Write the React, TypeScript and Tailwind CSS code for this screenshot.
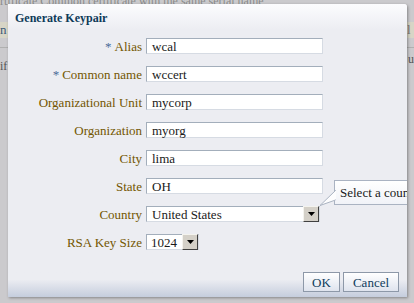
import React from "react";

function Arrow({ w }: { w: number }) {
  return (
    <div
      className="flex h-[16px] items-center justify-center border border-t-[#f4f3ee] border-l-[#f4f3ee] border-b-[#404040] border-r-[#404040] bg-[#d4d0c8]"
      style={{ width: w }}
    >
      <svg width="7" height="4" viewBox="0 0 7 4">
        <polygon points="0,0 7,0 3.5,4" fill="#000" />
      </svg>
    </div>
  );
}

function Row({ label, req, children }: { label: string; req?: boolean; children: React.ReactNode }) {
  return (
    <div className="flex h-[16px] items-center">
      <div className="w-[138px] whitespace-nowrap pr-[4px] text-right text-[13px] leading-none text-[#735600]">
        {req && <span className="mr-[3px] text-[#4a6a98]">*</span>}
        {label}
      </div>
      {children}
    </div>
  );
}

function Input({ value }: { value: string }) {
  return (
    <div className="flex h-[16px] w-[177px] items-center border border-[#d6dbe3] border-t-[#a3aebb] border-l-[#a3aebb] bg-white pl-[5px] text-[13px] leading-none text-[#1a1a1a]">
      {value}
    </div>
  );
}

export default function App() {
  return (
    <div className="relative h-[303px] w-[414px] overflow-hidden bg-[#cbcacd] font-['Liberation_Serif','Times_New_Roman',serif]">
      {/* background page */}
      <div className="absolute left-0 top-[-8px] w-[414px] overflow-hidden whitespace-nowrap text-[12px] text-[#8a8a8a]">
        rtificate Common certificate with the same serial name
      </div>
      <div className="absolute left-0 top-[22px] h-[16px] w-[414px] bg-[#d7d5c6]" />
      <div className="absolute left-0 top-[23px] text-[13px] leading-none text-[#3c5a78]">n</div>
      <div className="absolute left-[407px] top-[23px] text-[13px] leading-none text-[#777]">l</div>
      <div className="absolute left-0 top-[47px] h-px w-[414px] bg-[#b0b0b0]" />
      <div className="absolute left-0 top-[60px] text-[12px] leading-none text-[#555]">if:</div>
      <div className="absolute left-[408px] top-[53px] text-[12px] leading-none text-[#555]">u</div>

      {/* dialog */}
      <div className="absolute left-[8px] top-[4px] flex h-[293px] w-[399px] flex-col overflow-hidden rounded-tr-[3px] bg-[#ecedf2] shadow-[1px_1px_3px_rgba(0,0,0,0.35)]">
        <div className="flex h-[26px] items-center bg-linear-to-b from-[#fcfcfe] to-[#ecedf2] pl-[7px] pt-[1px] text-[12px] font-bold text-[#0d3a58]">
          Generate Keypair
        </div>
        <div className="flex flex-col gap-[12px] pt-[8px]">
          <Row label="Alias" req>
            <Input value="wcal" />
          </Row>
          <Row label="Common name" req>
            <Input value="wccert" />
          </Row>
          <Row label="Organizational Unit">
            <Input value="mycorp" />
          </Row>
          <Row label="Organization">
            <Input value="myorg" />
          </Row>
          <Row label="City">
            <Input value="lima" />
          </Row>
          <Row label="State">
            <Input value="OH" />
          </Row>
          <Row label="Country">
            <div className="flex h-[16px] w-[174px] items-center border border-[#d6dbe3] border-t-[#a3aebb] border-l-[#a3aebb] bg-white">
              <div className="flex-1 pl-[5px] text-[13px] leading-none text-[#1a1a1a]">United States</div>
              <Arrow w={16} />
            </div>
          </Row>
          <Row label="RSA Key Size">
            <div className="flex h-[16px] w-[53px] items-center border border-[#d6dbe3] border-t-[#a3aebb] border-l-[#a3aebb] bg-white">
              <div className="flex-1 pl-[4px] text-[13px] leading-none text-[#1a1a1a]">1024</div>
              <Arrow w={16} />
            </div>
          </Row>
        </div>
        <div className="flex-1" />
        <div className="flex h-[27px] items-start justify-end gap-[3px] bg-linear-to-b from-[#ecedf2] from-35% to-[#c5cddd] pr-[8px] pt-[2px]">
          <button className="h-[20px] w-[37px] border border-[#8d98a8] bg-linear-to-b from-[#ffffff] to-[#dfe4ee] font-['Liberation_Serif',serif] text-[13px] leading-none text-[#0f3d5c]">
            OK
          </button>
          <button className="h-[20px] w-[56px] border border-[#8d98a8] bg-linear-to-b from-[#ffffff] to-[#dfe4ee] font-['Liberation_Serif',serif] text-[13px] leading-none text-[#0f3d5c]">
            Cancel
          </button>
        </div>

        {/* tooltip */}
        <div className="absolute left-[326px] top-[176px] h-[25px] w-[120px] overflow-hidden whitespace-nowrap border border-[#aab3c2] bg-linear-to-b from-[#ffffff] to-[#f1f3f8] pl-[5px] pt-[5px] text-[13px] leading-none text-[#1a1a1a]">
          Select a coun
        </div>
        <svg className="absolute left-[311px] top-[184px]" width="17" height="18" viewBox="0 0 17 18">
          <polygon points="16.5,2.5 16.5,12 1,17.5" fill="#fdfdfe" stroke="#aab3c2" strokeWidth="1" />
          <rect x="16" y="3" width="2" height="8.5" fill="#fdfdfe" />
        </svg>
      </div>
    </div>
  );
}
